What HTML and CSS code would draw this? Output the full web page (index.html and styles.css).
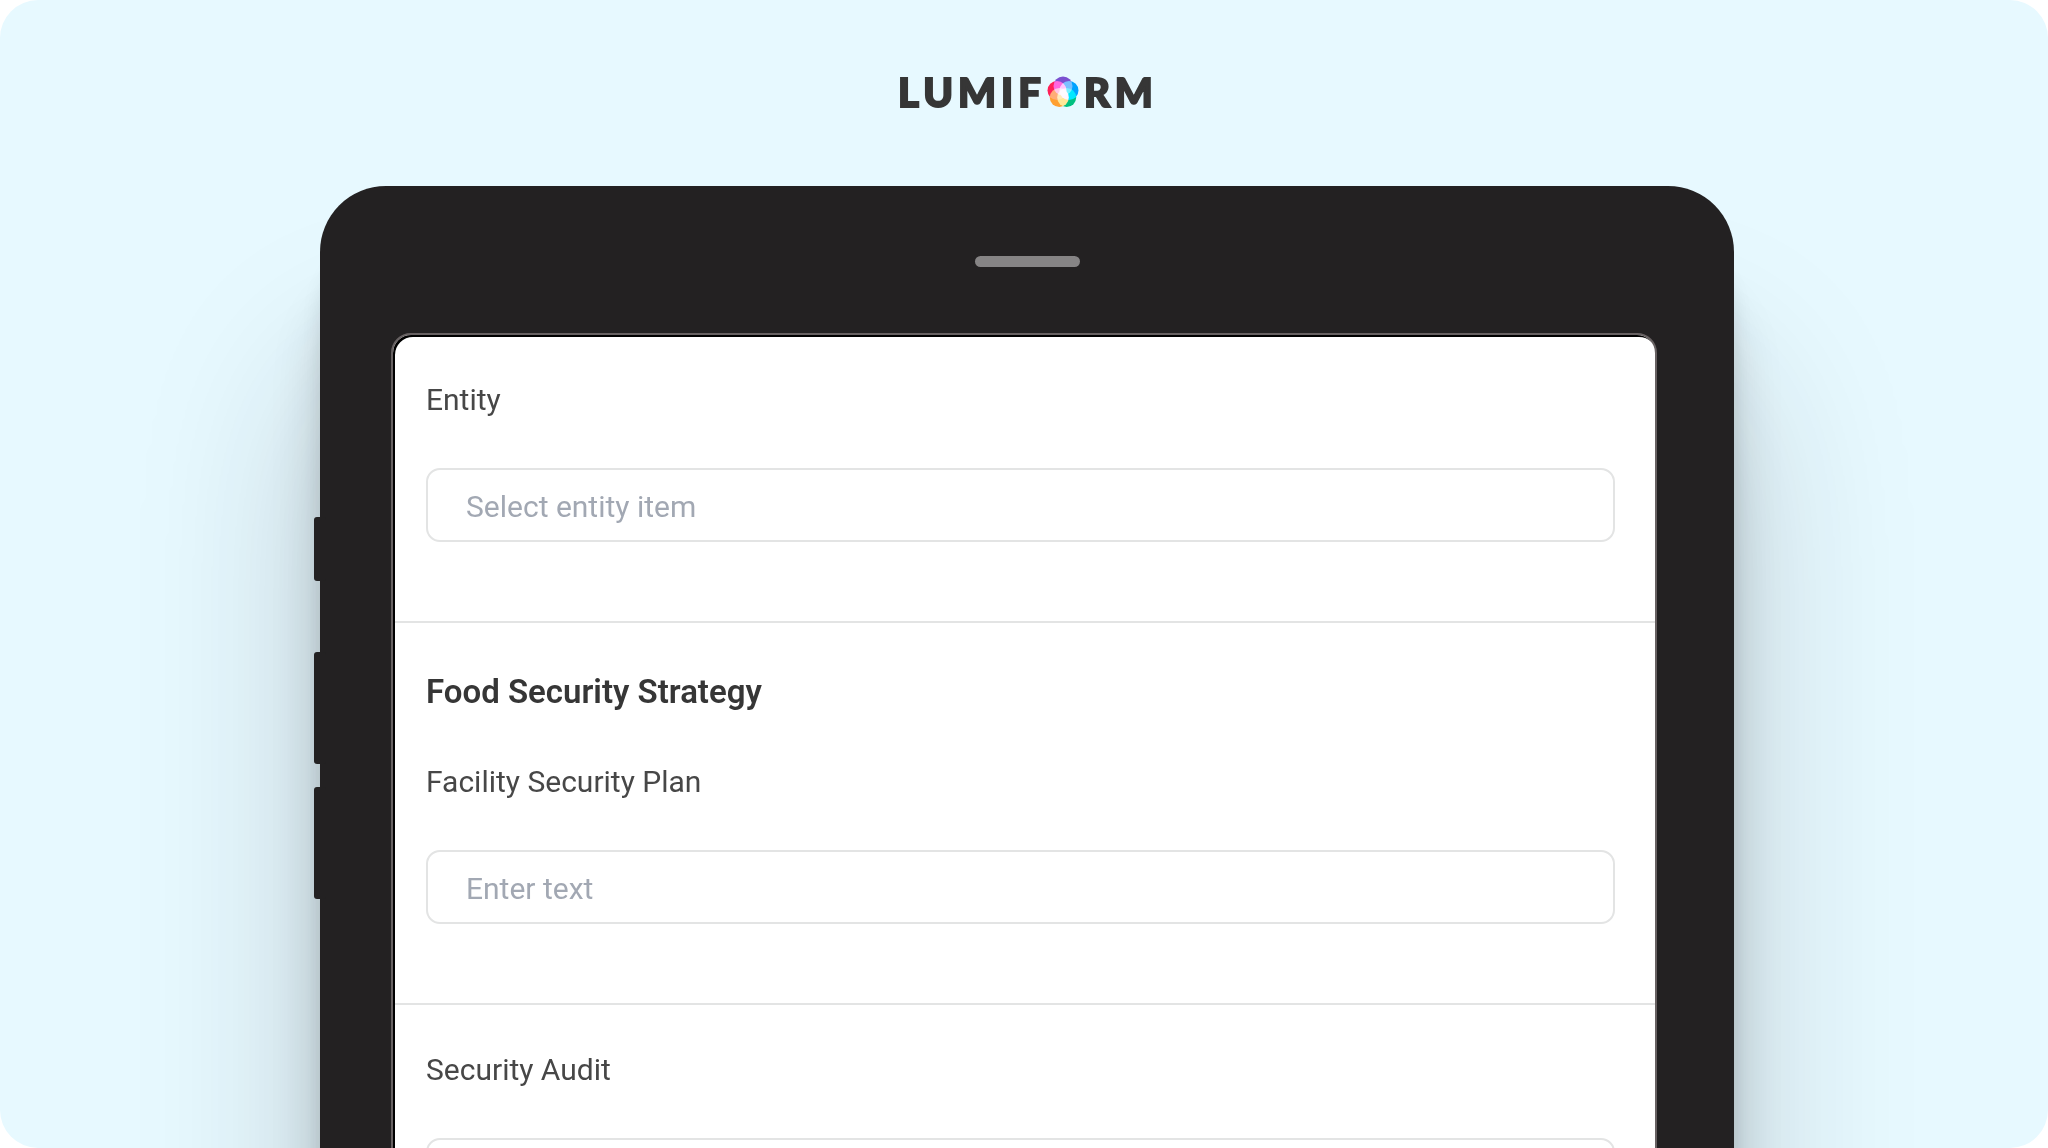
FILE: index.html
```html
<!DOCTYPE html>
<html lang="en">
<head>
  <meta charset="utf-8">
  <meta name="viewport" content="width=device-width, initial-scale=1">
  <title>Lumiform – Food Security Strategy</title>
  <link rel="stylesheet" href="styles.css">
</head>
<body>
  <main class="hero">
    <header class="brand" aria-label="Lumiform">
      <span>LUMIF</span>
      <svg class="brand-mark" viewBox="0 0 34 34" aria-hidden="true">
        <g class="petals">
          <circle class="petal-violet" cx="17" cy="11" r="9.5"/>
          <circle class="petal-blue" cx="23" cy="15.5" r="9.5"/>
          <circle class="petal-green" cx="20.7" cy="22.5" r="9.5"/>
          <circle class="petal-orange" cx="13.3" cy="22.5" r="9.5"/>
          <circle class="petal-red" cx="11" cy="15.5" r="9.5"/>
        </g>
      </svg>
      <span>RM</span>
    </header>

    <div class="stage">
      <div class="tablet">
        <span class="side-button side-button-power"></span>
        <span class="side-button side-button-up"></span>
        <span class="side-button side-button-down"></span>
        <div class="speaker"></div>
        <form class="screen">
          <section class="question">
            <label class="label" for="entity">Entity</label>
            <select class="field" id="entity">
              <option>Select entity item</option>
            </select>
          </section>
          <section class="question">
            <h2 class="heading">Food Security Strategy</h2>
            <label class="label" for="plan">Facility Security Plan</label>
            <input class="field" id="plan" type="text" placeholder="Enter text">
          </section>
          <section class="question">
            <label class="label" for="audit">Security Audit</label>
            <input class="field" id="audit" type="text">
          </section>
        </form>
      </div>
    </div>
  </main>
</body>
</html>
```
FILE: styles.css
```css
* {
  box-sizing: border-box;
}

body {
  margin: 0;
  background: #fff;
  color: #474747;
  font-family: Roboto, "Liberation Sans", sans-serif;
}

.hero {
  height: 100vh;
  overflow: hidden;
  border-radius: 38px;
  background: #e7f9ff;
}

/* Brand */
.brand {
  display: flex;
  align-items: center;
  justify-content: center;
  height: 186px;
  padding: 0 0 2px 8px;
  color: #363636;
  font-family: Lato, "Open Sans", sans-serif;
  font-size: 40px;
  font-weight: 900;
  line-height: 52px;
  letter-spacing: 5px;
  -webkit-text-stroke: 2px #363636;
}

.brand-mark {
  width: 34px;
  height: 34px;
  margin-right: 4px;
}

.petals {
  isolation: isolate;
}

.petals circle {
  mix-blend-mode: screen;
}

.petal-violet { fill: #7a50d0; }
.petal-blue { fill: #00a2ff; }
.petal-green { fill: #00c080; }
.petal-orange { fill: #ffa030; }
.petal-red { fill: #ff2058; }

/* Tablet */
.stage {
  display: grid;
  grid-template-columns: 320fr 1414fr 314fr;
}

.tablet {
  position: relative;
  grid-column: 2;
  padding: 70px 0 145px;
  border-radius: 66px;
  background: #232122;
  box-shadow:
    0 190px 180px rgba(30, 30, 40, 0.22),
    0 110px 50px rgba(30, 25, 25, 0.16),
    0 60px 20px rgba(30, 25, 25, 0.08);
}

.side-button {
  position: absolute;
  left: -6px;
  width: 12px;
  height: 112px;
  border-radius: 3px;
  background: #232122;
}

.side-button-power { top: 331px; height: 64px; }
.side-button-up { top: 466px; }
.side-button-down { top: 601px; }

.speaker {
  width: 105px;
  height: 11px;
  margin: 0 auto 66px;
  border-radius: 6px;
  background: #868485;
}

.screen {
  overflow: hidden;
  margin: 0 77px 0 71px;
  border: 2px solid #676162;
  border-radius: 20px;
  background: #fff;
  box-shadow: inset 2px 2px 0 #000;
}

/* Form */
.question {
  display: flex;
  flex-direction: column;
  padding: 45px 40px 79px 31px;
  margin-left: 2px;
  border-bottom: 2px solid #e3e4e4;
}

.heading {
  margin: 0 0 46px;
  color: #363636;
  font-size: 33px;
  font-weight: 600;
  line-height: 48px;
}

.label {
  margin-bottom: 48px;
  font-size: 30px;
  line-height: 40px;
}

.field {
  width: 100%;
  height: 74px;
  padding: 2px 38px 0;
  border: 2px solid #e3e4e4;
  border-radius: 14px;
  background: #fff;
  color: #a2a8b3;
  font: inherit;
  font-size: 30px;
  appearance: none;
}

.field::placeholder {
  color: #a2a8b3;
  opacity: 1;
}
```
